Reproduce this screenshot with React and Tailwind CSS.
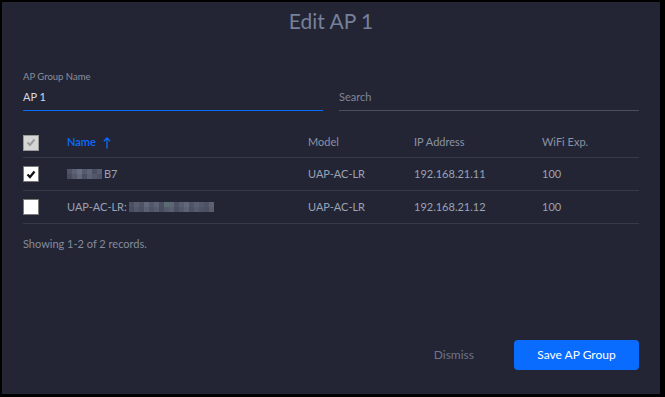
import React from "react";

const blur1 = [
  ["#4e5366", "#5c6175", "#6a6f82", "#555a6d", "#5f6477", "#4a4f62", "#575c6f"],
  ["#464b5e", "#53586b", "#62677a", "#4b5063", "#5b6073", "#52576a", "#4d5265"],
];
const blur2 = [
  ["#4b5063", "#575c6f", "#4e5366", "#62677a", "#53586b", "#5d6275", "#4a4f62", "#596e71", "#5f6477", "#4c5164", "#585d70", "#62677a", "#4f5467", "#5a5f72", "#53586b", "#4d5265", "#5c6174"],
  ["#474c5f", "#52576a", "#4a4f62", "#5a5f72", "#4e5366", "#565b6e", "#474c5f", "#53586b", "#595e71", "#494e61", "#52576a", "#5c6174", "#4b5063", "#555a6d", "#4e5366", "#4a4f62", "#575c6f"],
];

function Blur({ data }) {
  return (
    <span className="inline-flex flex-col align-middle">
      {data.map((row, i) => (
        <span key={i} className="flex">
          {row.map((c, j) => (
            <span key={j} className="block w-[5px] h-[5px]" style={{ backgroundColor: c }} />
          ))}
        </span>
      ))}
    </span>
  );
}

function Check({ checked, disabled }) {
  if (disabled) {
    return (
      <div className="w-[16px] h-[16px] border border-[#9a9a9a] bg-[#d6d6d6] flex items-center justify-center">
        <svg width="10" height="9" viewBox="0 0 10 9">
          <path d="M1.5 4.5 L4 7 L8.5 1.5" fill="none" stroke="#9c9c9c" strokeWidth="2" />
        </svg>
      </div>
    );
  }
  return (
    <div className="w-[16px] h-[16px] border border-[#7a7a7a] bg-white flex items-center justify-center">
      {checked && (
        <svg width="10" height="9" viewBox="0 0 10 9">
          <path d="M1.5 4.5 L4 7 L8.5 1.5" fill="none" stroke="#111" strokeWidth="2.2" />
        </svg>
      )}
    </div>
  );
}

const cols = "grid grid-cols-[44px_241px_106px_128px_1fr] items-center";

export default function App() {
  return (
    <div
      className="w-[665px] h-[397px] bg-black pt-[2px] pl-[2px]"
      style={{ fontFamily: "Lato, 'Noto Sans', sans-serif" }}
    >
      <div className="w-[658px] h-[392px] bg-[#232535] flex flex-col px-[21px]">
        <div className="text-center text-[21px] leading-[26px] text-[#75809a] pt-[6px]">
          Edit AP 1
        </div>

        <div className="flex gap-[16px] mt-[37px]">
          <div className="w-[300px]">
            <div className="text-[9.5px] leading-[12px] text-[#8a909f]">AP Group Name</div>
            <div className="text-[11px] leading-[14px] text-[#d5d9e1] mt-[7px] pb-[6px] border-b border-[#0a6cff]">
              AP 1
            </div>
          </div>
          <div className="w-[300px] pt-[19px]">
            <div className="text-[11px] leading-[14px] text-[#7f8697] pb-[6px] border-b border-[#4a4e5d]">
              Search
            </div>
          </div>
        </div>

        <div className={`${cols} h-[47px] pt-[17px] border-b border-[#363949] text-[11px] text-[#8a92a4]`}>
          <div><Check disabled /></div>
          <div className="flex items-center gap-[7px] text-[#0a6cff] font-semibold">
            <span>Name</span>
            <svg width="8" height="12" viewBox="0 0 8 12">
              <path d="M4 11.5 V1 M0.8 4.2 L4 1 L7.2 4.2" fill="none" stroke="#0a6cff" strokeWidth="1.3" />
            </svg>
          </div>
          <div>Model</div>
          <div>IP Address</div>
          <div>WiFi Exp.</div>
        </div>

        <div className={`${cols} h-[33px] border-b border-[#363949] text-[11px] text-[#9aa2b4]`}>
          <div><Check checked /></div>
          <div className="flex items-center gap-[2px]">
            <Blur data={blur1} />
            <span>B7</span>
          </div>
          <div>UAP-AC-LR</div>
          <div>192.168.21.11</div>
          <div>100</div>
        </div>

        <div className={`${cols} h-[33px] border-b border-[#363949] text-[11px] text-[#9aa2b4]`}>
          <div><Check /></div>
          <div className="flex items-center gap-[2px]">
            <span>UAP-AC-LR:</span>
            <Blur data={blur2} />
          </div>
          <div>UAP-AC-LR</div>
          <div>192.168.21.12</div>
          <div>100</div>
        </div>

        <div className="text-[11px] leading-[14px] text-[#838b9c] mt-[13px]">
          Showing 1-2 of 2 records.
        </div>

        <div className="flex-1" />

        <div className="flex items-center justify-end gap-[40px] mb-[24px]">
          <span className="text-[12px] text-[#6d7487]">Dismiss</span>
          <button className="w-[125px] h-[30px] rounded-[4px] bg-[#0a6cff] text-white text-[12px]">
            Save AP Group
          </button>
        </div>
      </div>
    </div>
  );
}
